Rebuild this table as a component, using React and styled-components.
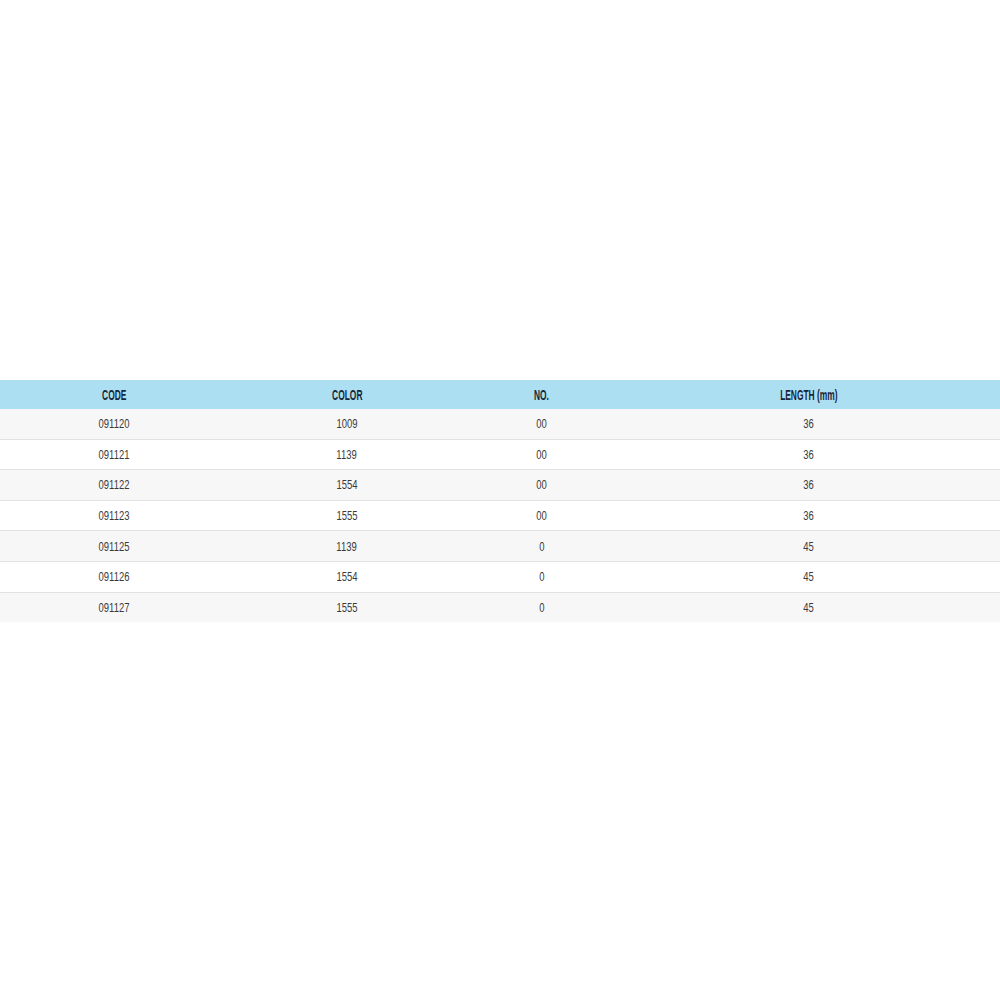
import styled, { createGlobalStyle } from 'styled-components';

const GlobalStyle = createGlobalStyle`
    html, body {
        margin: 0;
        padding: 0;
        background: #ffffff;
    }
`;

const rows = [
    ['091120', '1009', '00', '36'],
    ['091121', '1139', '00', '36'],
    ['091122', '1554', '00', '36'],
    ['091123', '1555', '00', '36'],
    ['091125', '1139', '0', '45'],
    ['091126', '1554', '0', '45'],
    ['091127', '1555', '0', '45'],
];

const widths = ['229px', '236px', '153px', 'auto'];

export default function App() {
    return (
        <Page>
            <GlobalStyle />
            <Table>
                <colgroup>
                    {widths.map((w, i) => <col key={i} style={{ width: w }} />)}
                </colgroup>
                <thead>
                    <tr>
                        <HeadCell><Narrow $scale={0.6}>CODE</Narrow></HeadCell>
                        <HeadCell><Narrow $scale={0.6}>COLOR</Narrow></HeadCell>
                        <HeadCell><Narrow $scale={0.6}>NO.</Narrow></HeadCell>
                        <HeadCell><Narrow $scale={0.6}>LENGTH (mm)</Narrow></HeadCell>
                    </tr>
                </thead>
                <tbody>
                    {rows.map((r, i) => (
                        <Row key={r[0]} $odd={i % 2 === 0}>
                            {r.map((v, j) => <Cell key={j}><Narrow>{v}</Narrow></Cell>)}
                        </Row>
                    ))}
                </tbody>
            </Table>
        </Page>
    );
}

const Page = styled.div`
    padding-top: 380px;
    width: 1000px;
`;

const Table = styled.table`
    width: 100%;
    border-collapse: collapse;
    table-layout: fixed;
    font-family: "Liberation Sans", Arial, sans-serif;
`;

const Narrow = styled.span`
    display: inline-block;
    transform: scaleX(${p => p.$scale || 0.7});
    white-space: nowrap;
`;

const HeadCell = styled.th`
    background: #addff3;
    height: 29px;
    padding: 0;
    text-align: center;
    font-size: 14px;
    font-weight: 700;
    color: #16263a;
`;

const Row = styled.tr`
    background: ${p => (p.$odd ? '#f7f7f7' : '#ffffff')};
    & + & {
        border-top: 1px solid #e2e2e2;
    }
`;

const Cell = styled.td`
    height: 29.6px;
    padding: 0;
    text-align: center;
    font-size: 13.5px;
    color: #3a3a3a;
`;
